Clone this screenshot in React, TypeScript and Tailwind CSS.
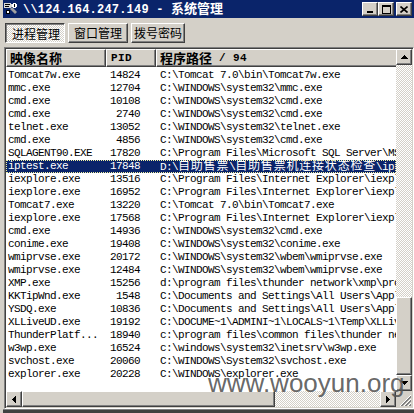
import React from 'react';

// ── Data ────────────────────────────────────────────────────────────────────

const ROWS: [string, string, string][] = [
  ['Tomcat7w.exe', '14824', 'C:\\Tomcat 7.0\\bin\\Tomcat7w.exe'],
  ['mmc.exe', '12704', 'C:\\WINDOWS\\system32\\mmc.exe'],
  ['cmd.exe', '10108', 'C:\\WINDOWS\\system32\\cmd.exe'],
  ['cmd.exe', '2740', 'C:\\WINDOWS\\system32\\cmd.exe'],
  ['telnet.exe', '13052', 'C:\\WINDOWS\\system32\\telnet.exe'],
  ['cmd.exe', '4856', 'C:\\WINDOWS\\system32\\cmd.exe'],
  ['SQLAGENT90.EXE', '17820', 'C:\\Program Files\\Microsoft SQL Server\\MSSQL.1\\MSSQL\\Binn\\SQLAGENT90.EXE'],
  ['iptest.exe', '17848', 'D:\\自助售票\\自助售票机连接状态检查\\iptest.exe'],
  ['iexplore.exe', '13516', 'C:\\Program Files\\Internet Explorer\\iexplore.exe'],
  ['iexplore.exe', '16952', 'C:\\Program Files\\Internet Explorer\\iexplore.exe'],
  ['Tomcat7.exe', '13220', 'C:\\Tomcat 7.0\\bin\\Tomcat7.exe'],
  ['iexplore.exe', '17568', 'C:\\Program Files\\Internet Explorer\\iexplore.exe'],
  ['cmd.exe', '14936', 'C:\\WINDOWS\\system32\\cmd.exe'],
  ['conime.exe', '19408', 'C:\\WINDOWS\\system32\\conime.exe'],
  ['wmiprvse.exe', '20172', 'C:\\WINDOWS\\system32\\wbem\\wmiprvse.exe'],
  ['wmiprvse.exe', '12484', 'C:\\WINDOWS\\system32\\wbem\\wmiprvse.exe'],
  ['XMP.exe', '15256', 'd:\\program files\\thunder network\\xmp\\program\\XMP.exe'],
  ['KKTipWnd.exe', '1548', 'C:\\Documents and Settings\\All Users\\Application Data\\KKTipWnd.exe'],
  ['YSDQ.exe', '10836', 'C:\\Documents and Settings\\All Users\\Application Data\\YSDQ.exe'],
  ['XLLiveUD.exe', '19192', 'C:\\DOCUME~1\\ADMINI~1\\LOCALS~1\\Temp\\XLLiveUD.exe'],
  ['ThunderPlatf...', '18940', 'c:\\program files\\common files\\thunder network\\ThunderPlatform.exe'],
  ['w3wp.exe', '16524', 'c:\\windows\\system32\\inetsrv\\w3wp.exe'],
  ['svchost.exe', '20060', 'C:\\WINDOWS\\System32\\svchost.exe'],
  ['explorer.exe', '20228', 'C:\\WINDOWS\\explorer.exe'],
];

const SELECTED = 7;

// ── Shared styles ───────────────────────────────────────────────────────────

const raised =
  'border border-t-white border-l-white border-r-[#404040] border-b-[#404040] shadow-[inset_-1px_-1px_0_#808080] bg-[#d4d0c8]';
const checker =
  'bg-[image:repeating-conic-gradient(#ffffff_0%_25%,#d4d0c8_0%_50%)] bg-[length:2px_2px]';

// CJK runs get their own font so they are wider than the 6px mono cells
function Txt({ s }: { s: string }) {
  const parts = s.split(/([\u4e00-\u9fff]+)/);
  return (
    <>
      {parts.map((p, i) =>
        i % 2 === 1 ? (
          <span key={i} className="font-['Noto_Sans_CJK_SC'] text-[12px] leading-[10px] tracking-[0.8px]">
            {p}
          </span>
        ) : (
          <React.Fragment key={i}>{p}</React.Fragment>
        )
      )}
    </>
  );
}

// ── Small drawings ──────────────────────────────────────────────────────────

function TitleIcon() {
  return (
    <svg width="16" height="14" viewBox="0 0 16 14" className="shrink-0">
      <path d="M1 1h7v1h1v3H8v1H1z" fill="#d8d8d8" />
      <path d="M2 2h5v1H2zM2 4h4v1H2z" fill="#000" />
      <path d="M9 5l5 5-2 2-5-5z" fill="#a0a0a0" />
      <path d="M10 1h3v1h1v3h-1v1h-3V5H9V2h1z" fill="#ffffff" />
      <path d="M11 2h1v3h-1z" fill="#000" />
      <path d="M3 8h4v4H3z" fill="#000" />
      <path d="M4 9h2v2H4z" fill="#ffffff" />
    </svg>
  );
}

function UpArrow() {
  return (
    <svg width="7" height="4" viewBox="0 0 7 4">
      <path d="M3 0H4V1H5V2H6V3H7V4H0V3H1V2H2V1H3Z" fill="#000" />
    </svg>
  );
}

function DownArrow() {
  return (
    <svg width="7" height="4" viewBox="0 0 7 4">
      <path d="M0 0H7V1H6V2H5V3H4V4H3V3H2V2H1V1H0Z" fill="#000" />
    </svg>
  );
}

function LeftArrow() {
  return (
    <svg width="4" height="7" viewBox="0 0 4 7">
      <path d="M0 3V4H1V5H2V6H3V7H4V0H3V1H2V2H1V3Z" fill="#000" />
    </svg>
  );
}

function RightArrow() {
  return (
    <svg width="4" height="7" viewBox="0 0 4 7">
      <path d="M4 3V4H3V5H2V6H1V7H0V0H1V1H2V2H3V3Z" fill="#000" />
    </svg>
  );
}

function SizeGrip() {
  return (
    <svg width="16" height="16" viewBox="0 0 16 16">
      <path d="M15 4L4 15M15 8L8 15M15 12L12 15" stroke="#ffffff" strokeWidth="1" />
      <path d="M15 5L5 15M15 6L6 15M15 9L9 15M15 10L10 15M15 13L13 15M15 14L14 15" stroke="#808080" strokeWidth="1" />
    </svg>
  );
}

// ── Title bar ───────────────────────────────────────────────────────────────

function CaptionButton({ kind }: { kind: 'min' | 'max' | 'close' }) {
  return (
    <div className={`flex h-[14px] w-[16px] items-center justify-center ${raised}`}>
      {kind === 'min' && (
        <svg width="8" height="8" viewBox="0 0 8 8">
          <path d="M1 6h6v2H1z" fill="#000" />
        </svg>
      )}
      {kind === 'max' && (
        <svg width="9" height="9" viewBox="0 0 9 9">
          <path d="M0 0h9v9H0zM1 2v6h7V2z" fill="#000" fillRule="evenodd" />
        </svg>
      )}
      {kind === 'close' && (
        <svg width="8" height="7" viewBox="0 0 8 7">
          <path d="M0.5 0.5L7.5 6.5M7.5 0.5L0.5 6.5" stroke="#000" strokeWidth="1.6" />
        </svg>
      )}
    </div>
  );
}

// ── App ─────────────────────────────────────────────────────────────────────

export default function App() {
  return (
    <div className="relative h-[413px] w-[414px] overflow-hidden bg-[#d4d0c8] pl-[3px] font-['Liberation_Mono','Noto_Sans_CJK_SC',monospace] text-black">
      <div className="flex h-full flex-col">
        {/* Title bar */}
        <div className="flex h-[18px] shrink-0 items-center bg-[#0a246a] pr-[2px]">
          <TitleIcon />
          <span className="ml-[4px] whitespace-nowrap text-[12px] font-bold leading-[16px] tracking-[0.2px] text-white">
            {'\\\\124.164.247.149 - '}
            <span className="font-['Noto_Sans_CJK_SC'] text-[13px] leading-[14px] tracking-normal">系统管理</span>
          </span>
          <div className="ml-auto flex items-center">
            <CaptionButton kind="min" />
            <CaptionButton kind="max" />
            <div className="ml-[2px]">
              <CaptionButton kind="close" />
            </div>
          </div>
        </div>

        {/* Tab buttons */}
        <div className="ml-[2px] mt-[5px] flex h-[20px] shrink-0 gap-[3px] font-['Noto_Sans_CJK_SC'] text-[12px]">
          <div className={`flex w-[60px] items-center justify-center border border-t-[#404040] border-l-[#404040] border-b-white border-r-white pl-[2px] pt-[1px] shadow-[inset_1px_1px_0_#808080] ${checker}`}>
            进程管理
          </div>
          <div className={`flex w-[60px] items-center justify-center ${raised}`}>窗口管理</div>
          <div className={`flex w-[54px] items-center justify-center ${raised}`}>拨号密码</div>
        </div>

        {/* List view */}
        <div className="ml-[1px] mt-[4px] h-[362px] shrink-0 border border-t-[#808080] border-l-[#808080] border-b-white border-r-white p-[1px] shadow-[inset_1px_1px_0_#404040,inset_-1px_-1px_0_#d4d0c8]">
          <div className="grid h-full grid-cols-[390px_16px] grid-rows-[342px_16px] bg-white">
            {/* Header + rows */}
            <div className="flex min-w-0 flex-col overflow-hidden">
              <div className="flex h-[18px] shrink-0 text-[11px] font-bold">
                <div className={`flex w-[100px] shrink-0 items-center pl-[3px] font-['Noto_Sans_CJK_SC'] text-[13px] ${raised}`}>
                  映像名称
                </div>
                <div className={`flex w-[50px] shrink-0 items-center pl-[4px] tracking-[0.4px] ${raised}`}>PID</div>
                <div className={`flex w-[260px] shrink-0 items-center whitespace-nowrap pl-[3px] ${raised}`}>
                  <span className="font-['Noto_Sans_CJK_SC'] text-[13px]">程序路径</span>
                  <span className="tracking-[0.4px]">&nbsp;/ 94</span>
                </div>
              </div>
              <div className="flex flex-col pt-[2px] text-[11px] tracking-[-0.6px]">
                {ROWS.map(([name, pid, path], i) => {
                  const sel = i === SELECTED;
                  return (
                    <div
                      key={i}
                      className={`flex h-[13px] leading-[13px] whitespace-nowrap ${
                        sel
                          ? 'bg-[#0a246a] text-white outline-1 -outline-offset-1 outline-dotted outline-[#f0f0a0]'
                          : ''
                      }`}
                    >
                      <div className="w-[100px] shrink-0 overflow-hidden pl-[2px]">{name}</div>
                      <div className="w-[50px] shrink-0 pr-[16px] text-right">{pid}</div>
                      <div className="h-[13px] min-w-0 flex-1 overflow-hidden pl-[4px]">
                        <Txt s={path} />
                      </div>
                    </div>
                  );
                })}
              </div>
            </div>

            {/* Vertical scrollbar */}
            <div className="flex flex-col">
              <div className={`flex h-[16px] shrink-0 items-center justify-center ${raised}`}>
                <UpArrow />
              </div>
              <div className={`h-[232px] shrink-0 ${checker}`} />
              <div className={`h-[78px] shrink-0 ${raised}`} />
              <div className={`flex h-[16px] shrink-0 items-center justify-center ${raised}`}>
                <DownArrow />
              </div>
            </div>

            {/* Horizontal scrollbar */}
            <div className="flex">
              <div className={`flex w-[16px] shrink-0 items-center justify-center ${raised}`}>
                <LeftArrow />
              </div>
              <div className={`w-[253px] shrink-0 ${raised}`} />
              <div className={`w-[105px] shrink-0 ${checker}`} />
              <div className={`flex w-[16px] shrink-0 items-center justify-center ${raised}`}>
                <RightArrow />
              </div>
            </div>

            {/* Size grip corner */}
            <div className="bg-[#d4d0c8]">
              <SizeGrip />
            </div>
          </div>
        </div>

        {/* Bottom edge */}
        <div className="h-[4px] shrink-0 border-t border-[#808080] bg-[#404040]" />
      </div>

      {/* Watermark */}
      <div className="pointer-events-none absolute left-[208px] top-[370px] whitespace-nowrap font-['Liberation_Sans',Arial,sans-serif] text-[26px] leading-[26px] text-[#555555]/90">
        www.wooyun.org
      </div>
    </div>
  );
}
